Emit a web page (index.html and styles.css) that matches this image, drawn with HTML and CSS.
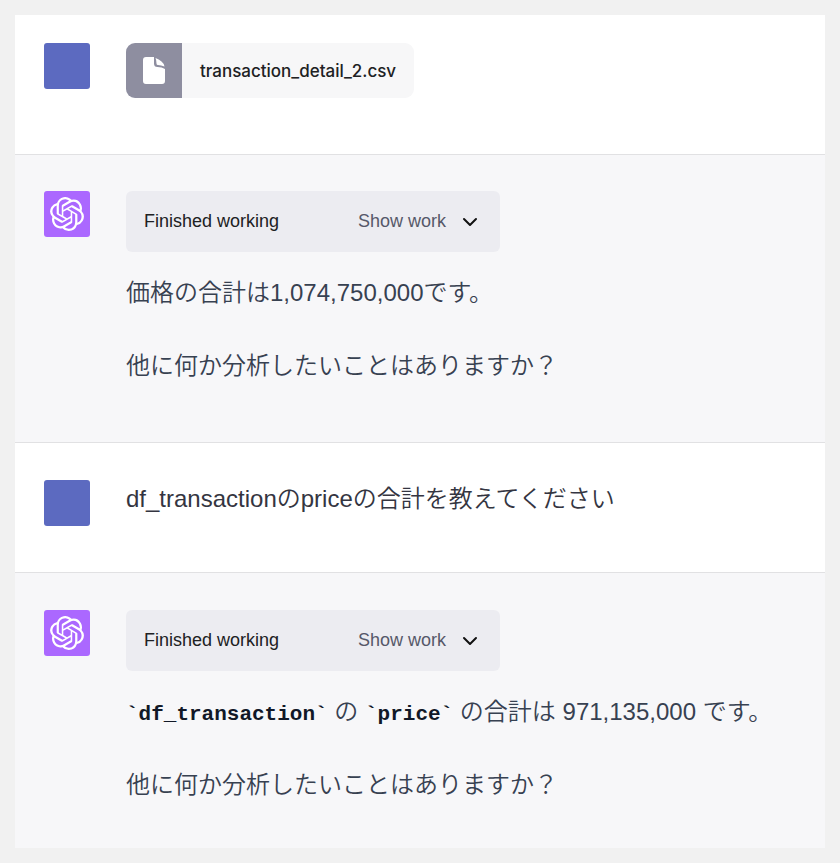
FILE: index.html
```html
<!DOCTYPE html>
<html lang="ja">
<head>
<meta charset="utf-8">
<meta name="viewport" content="width=device-width, initial-scale=1">
<title>Chat</title>
<link rel="stylesheet" href="styles.css">
</head>
<body>
<svg class="symbols" aria-hidden="true">
  <symbol id="logo" viewBox="0 0 24 24"><path d="M22.2819 9.8211a5.9847 5.9847 0 0 0-.5157-4.9108 6.0462 6.0462 0 0 0-6.5098-2.9A6.0651 6.0651 0 0 0 4.9807 4.1818a5.9847 5.9847 0 0 0-3.9977 2.9 6.0462 6.0462 0 0 0 .7427 7.0966 5.98 5.98 0 0 0 .511 4.9107 6.051 6.051 0 0 0 6.5146 2.9001A5.9847 5.9847 0 0 0 13.2599 24a6.0557 6.0557 0 0 0 5.7718-4.2058 5.9894 5.9894 0 0 0 3.9977-2.9001 6.0557 6.0557 0 0 0-.7475-7.0729zm-9.022 12.6081a4.4755 4.4755 0 0 1-2.8764-1.0408l.1419-.0804 4.7783-2.7582a.7948.7948 0 0 0 .3927-.6813v-6.7369l2.02 1.1686a.071.071 0 0 1 .038.052v5.5826a4.504 4.504 0 0 1-4.4945 4.4944zm-9.6607-4.1254a4.4708 4.4708 0 0 1-.5346-3.0137l.142.0852 4.783 2.7582a.7712.7712 0 0 0 .7806 0l5.8428-3.3685v2.3324a.0804.0804 0 0 1-.0332.0615L9.74 19.9502a4.4992 4.4992 0 0 1-6.1408-1.6464zM2.3408 7.8956a4.485 4.485 0 0 1 2.3655-1.9728V11.6a.7664.7664 0 0 0 .3879.6765l5.8144 3.3543-2.0201 1.1685a.0757.0757 0 0 1-.071 0l-4.8303-2.7865A4.504 4.504 0 0 1 2.3408 7.872zm16.5963 3.8558L13.1038 8.364 15.1192 7.2a.0757.0757 0 0 1 .071 0l4.8303 2.7913a4.4944 4.4944 0 0 1-.6765 8.1042v-5.6772a.79.79 0 0 0-.407-.667zm2.0107-3.0231l-.142-.0852-4.7735-2.7818a.7759.7759 0 0 0-.7854 0L9.409 9.2297V6.8974a.0662.0662 0 0 1 .0284-.0615l4.8303-2.7866a4.4992 4.4992 0 0 1 6.6802 4.66zM8.3065 12.863l-2.02-1.1638a.0804.0804 0 0 1-.038-.0567V6.0742a4.4992 4.4992 0 0 1 7.3757-3.4537l-.142.0805L8.704 5.459a.7948.7948 0 0 0-.3927.6813zm1.0976-2.3654l2.602-1.4998 2.6069 1.4998v2.9994l-2.5974 1.4997-2.6067-1.4997Z"/></symbol>
  <symbol id="chevron" viewBox="0 0 16 16"><path d="M2 5l6 6 6-6"/></symbol>
</svg>
<main class="chat">
  <section class="message user file-message">
    <div class="avatar"></div>
    <div class="content">
      <div class="file">
        <span class="file-icon">
          <svg viewBox="0 0 22 27" aria-hidden="true"><path d="M3 0H11V6.500Q11 10 14.500 10Q19 10 22 12V24Q22 27 19 27H3Q0 27 0 24V3Q0 0 3 0Z"/><path d="M12.500 1Q16 2 18.500 4.500Q21 6.500 21.500 9.500Q18 8.300 15 8Q13.500 8 13.500 6.500Q13.500 3 12.500 1Z"/></svg>
        </span>
        <span class="file-name">transaction_detail_2.csv</span>
      </div>
    </div>
  </section>
  <section class="message assistant roomy">
    <div class="avatar"><svg aria-hidden="true"><use href="#logo"/></svg></div>
    <div class="content">
      <div class="status"><span>Finished working</span><button type="button">Show work<svg aria-hidden="true"><use href="#chevron"/></svg></button></div>
      <p>価格の合計は1,074,750,000です。</p>
      <p>他に何か分析したいことはありますか？</p>
    </div>
  </section>
  <section class="message user">
    <div class="avatar"></div>
    <div class="content"><p>df_transactionのpriceの合計を教えてください</p></div>
  </section>
  <section class="message assistant">
    <div class="avatar"><svg aria-hidden="true"><use href="#logo"/></svg></div>
    <div class="content">
      <div class="status"><span>Finished working</span><button type="button">Show work<svg aria-hidden="true"><use href="#chevron"/></svg></button></div>
      <p><code>`df_transaction`</code> の <code>`price`</code> の合計は 971,135,000 です。</p>
      <p>他に何か分析したいことはありますか？</p>
    </div>
  </section>
</main>
</body>
</html>
```
FILE: styles.css
```css
* {
  box-sizing: border-box;
}

body {
  margin: 15px;
  background: #f1f1f1;
  color: #374151;
  font: 350 24px/37px "Liberation Sans", "Noto Sans CJK JP", sans-serif;
}

p {
  margin: 0;
}

.symbols {
  display: none;
}

.message {
  display: flex;
  gap: 36px;
  padding: 37px 28px 46px 29px;
  border-bottom: 1px solid #e1e1e3;
}

.message:last-child {
  padding-bottom: 45px;
  border-bottom: 0;
}

.user {
  background: #fff;
  color: #343541;
}

.assistant {
  background: #f7f7f9;
}

.roomy {
  padding-top: 36px;
  padding-bottom: 58px;
}

.file-message {
  padding-top: 28px;
  padding-bottom: 56px;
}

.avatar {
  display: flex;
  flex: none;
  align-items: center;
  justify-content: center;
  width: 46px;
  height: 46px;
  border-radius: 3px;
  background: #5c6ac0;
}

.assistant .avatar {
  background: #ab68ff;
}

.avatar svg {
  width: 34px;
  height: 34px;
  fill: #fff;
}

.content {
  flex: 1;
  min-width: 0;
}

.content p + p {
  margin-top: 36px;
}

.file {
  display: inline-flex;
  vertical-align: top;
  height: 55px;
  overflow: hidden;
  border-radius: 9px;
  background: #f7f7f8;
}

.file-icon {
  display: flex;
  align-items: center;
  justify-content: center;
  width: 56px;
  background: #8e8ea0;
}

.file-icon svg {
  width: 22px;
  height: 27px;
  fill: #fff;
}

.file-name {
  padding: 0 18px;
  color: #202123;
  font: 500 17px/56px Inter, sans-serif;
}

.status {
  display: flex;
  align-items: center;
  justify-content: space-between;
  width: 374px;
  max-width: 100%;
  height: 61px;
  margin-bottom: 22px;
  padding: 0 22px 0 18px;
  border-radius: 6px;
  background: #ececf1;
  color: #202123;
  font-size: 18px;
}

.status button {
  display: flex;
  align-items: center;
  gap: 16px;
  padding: 0;
  border: 0;
  background: none;
  color: #565869;
  font: inherit;
  cursor: pointer;
}

.status svg {
  width: 16px;
  height: 16px;
  fill: none;
  stroke: #111;
  stroke-width: 2;
  stroke-linecap: round;
  stroke-linejoin: round;
}

code {
  color: #111827;
  font: 700 21px/24px "Liberation Mono", monospace;
}
```
